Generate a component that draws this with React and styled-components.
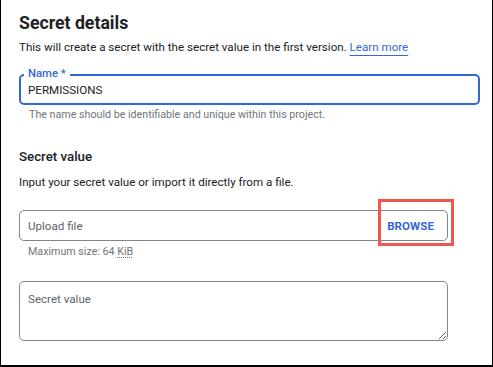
import React from 'react';
import styled, { createGlobalStyle } from 'styled-components';

const GlobalStyle = createGlobalStyle`
  html, body {
    margin: 0;
    background: #fff;
  }
  body {
    font-family: Roboto, "Liberation Sans", Arial, sans-serif;
    color: #202124;
  }
`;

const Frame = styled.div`
  box-sizing: border-box;
  width: 493px;
  height: 367px;
  padding: 11px 14px 0 18px;
  border-left: 1px solid #000;
  border-right: 1px solid #000;
  border-bottom: 2px solid #000;
  background: #fff;
`;

const Title = styled.h2`
  margin: 0;
  font-size: 17.7px;
  line-height: 24px;
  font-weight: 700;
`;

const Description = styled.p`
  margin: ${p => p.$top || 0}px 0 0;
  font-size: 11.6px;
  line-height: 20px;
`;

const Link = styled.a`
  color: #3367d6;
  text-decoration: underline;
  text-underline-offset: 4px;
  text-decoration-thickness: 1px;
`;

const Section = styled.h3`
  margin: 25px 0 0;
  font-size: 13.3px;
  line-height: 20px;
  font-weight: 500;
`;

const Field = styled.div`
  position: relative;
  box-sizing: border-box;
  display: flex;
  align-items: center;
  width: ${p => p.$width}px;
  height: ${p => p.$height || 31}px;
  margin-top: ${p => p.$top}px;
  border: ${p => (p.$focused ? '2px solid #3367d6' : '1px solid #80868b')};
  border-radius: 5px;
  padding-left: ${p => (p.$focused ? 7 : 8)}px;
`;

const FloatingLabel = styled.label`
  position: absolute;
  left: 3px;
  top: -8px;
  padding: 0 4px;
  background: #fff;
  color: #3367d6;
  font-size: 11.3px;
  line-height: 12px;
  font-weight: 500;
`;

const Input = styled.input`
  flex: 1;
  min-width: 0;
  border: 0;
  outline: 0;
  padding: 0;
  background: transparent;
  font-family: inherit;
  font-size: 11.6px;
  color: #202124;

  &::placeholder {
    color: #5f6368;
  }
`;

const Hint = styled.div`
  margin: ${p => p.$top}px 0 0 ${p => p.$left || 10}px;
  font-size: 10.7px;
  line-height: 14px;
  color: #70757a;

  abbr {
    text-decoration: underline dotted;
    text-underline-offset: 2px;
  }
`;

const BrowseButton = styled.button`
  border: 0;
  background: transparent;
  padding: 0 13px 0 9px;
  height: 100%;
  font-family: inherit;
  font-size: 11.5px;
  font-weight: 700;
  letter-spacing: 0.1px;
  color: #3367d6;
  cursor: pointer;
`;

const Highlight = styled.span`
  position: absolute;
  top: -12px;
  bottom: -6px;
  right: -7px;
  width: 76px;
  box-sizing: border-box;
  border: 3px solid #f0564a;
  pointer-events: none;
`;

const TextArea = styled.textarea`
  display: block;
  box-sizing: border-box;
  width: 429px;
  height: 60px;
  margin-top: 22px;
  padding: 9px 8px;
  border: 1px solid #80868b;
  border-radius: 5px;
  font-family: inherit;
  font-size: 11.6px;
  line-height: 16px;
  color: #202124;
  resize: vertical;
  outline: 0;

  &::placeholder {
    color: #5f6368;
  }
`;

export default function App() {
  return (
    <>
      <GlobalStyle />
      <Frame>
        <Title>Secret details</Title>
        <Description $top={2}>
          This will create a secret with the secret value in the first version.{' '}
          <Link href="#">Learn more</Link>
        </Description>

        <Field $focused $width={461} $top={17}>
          <FloatingLabel>Name *</FloatingLabel>
          <Input defaultValue="PERMISSIONS" />
        </Field>
        <Hint $top={3}>The name should be identifiable and unique within this project.</Hint>

        <Section>Secret value</Section>
        <Description $top={5}>
          Input your secret value or import it directly from a file.
        </Description>

        <Field $width={429} $top={18}>
          <Input placeholder="Upload file" readOnly />
          <BrowseButton>BROWSE</BrowseButton>
          <Highlight />
        </Field>
        <Hint $top={4} $left={9}>
          Maximum size: 64 <abbr title="kibibytes">KiB</abbr>
        </Hint>

        <TextArea placeholder="Secret value" />
      </Frame>
    </>
  );
}
